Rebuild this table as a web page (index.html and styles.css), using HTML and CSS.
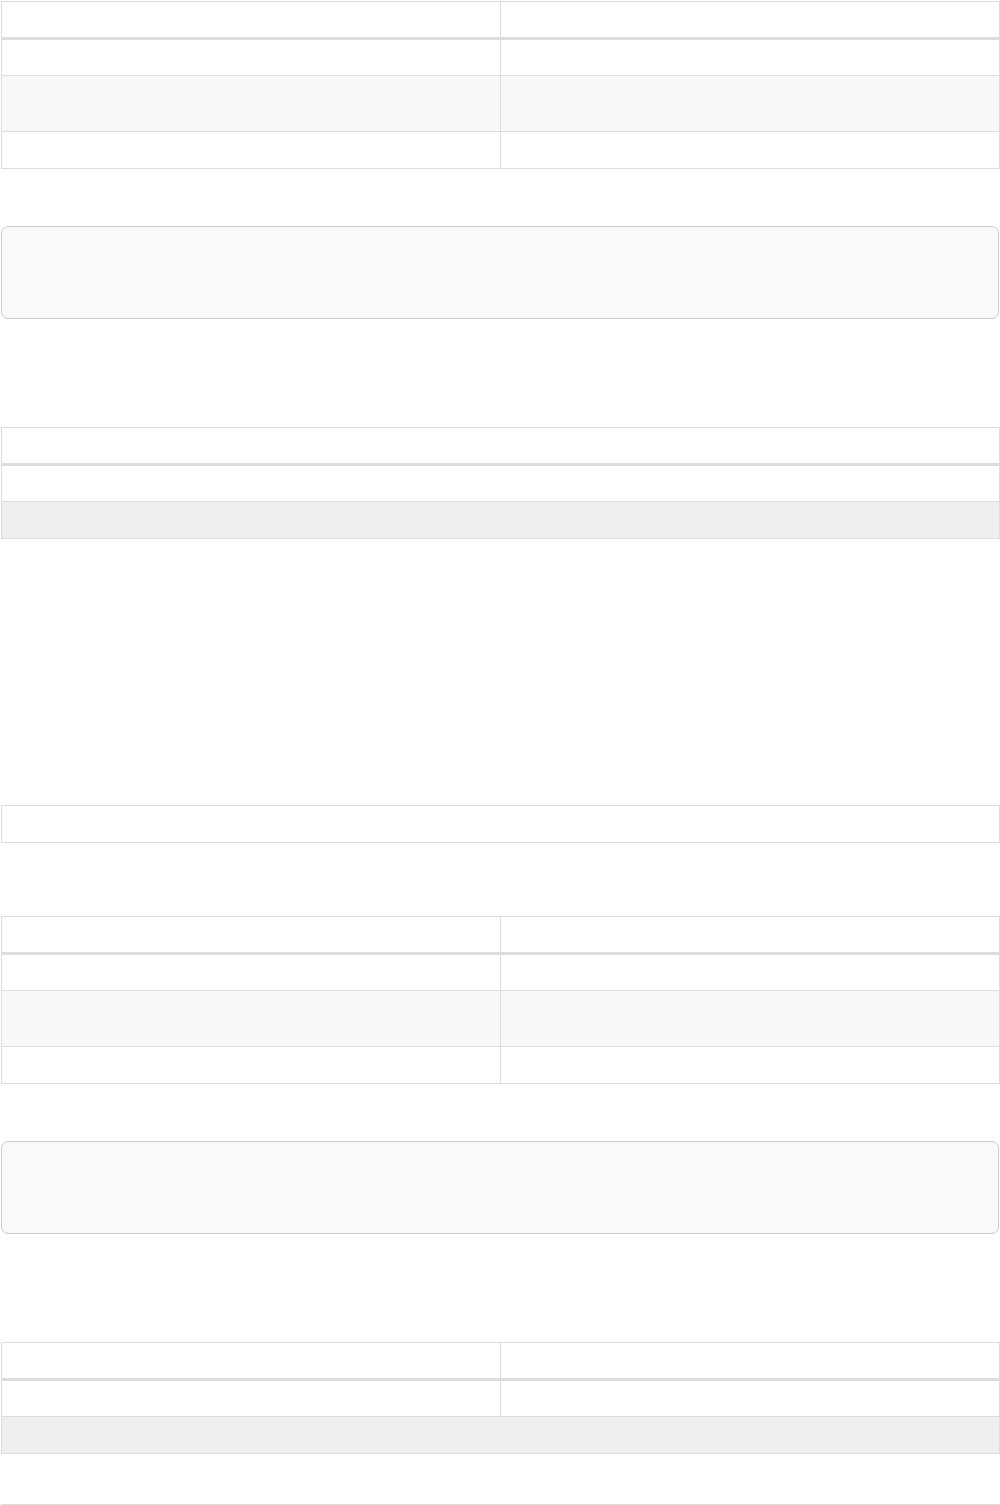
FILE: index.html
```html
<!DOCTYPE html>
<html>
  <head>
    <meta name="viewport" content="width=device-width, initial-scale=1">
    <link rel="stylesheet" href="styles.css">
  </head>
  <body>
    <div class="grid-table">
      <div class="row head"><div class="cell"></div><div class="cell"></div></div>
      <div class="row"><div class="cell"></div><div class="cell"></div></div>
      <div class="row tall striped"><div class="cell"></div><div class="cell"></div></div>
      <div class="row last"><div class="cell"></div><div class="cell"></div></div>
    </div>

    <pre class="callout callout-top"></pre>

    <div class="grid-table block-gap">
      <div class="row head wide"><div class="cell"></div></div>
      <div class="row wide"><div class="cell"></div></div>
      <div class="row wide last muted"><div class="cell"></div></div>
    </div>

    <div class="grid-table single">
      <div class="row wide last"><div class="cell"></div></div>
    </div>

    <div class="grid-table after-single">
      <div class="row head"><div class="cell"></div><div class="cell"></div></div>
      <div class="row"><div class="cell"></div><div class="cell"></div></div>
      <div class="row tall striped"><div class="cell"></div><div class="cell"></div></div>
      <div class="row last"><div class="cell"></div><div class="cell"></div></div>
    </div>

    <pre class="callout callout-top"></pre>

    <div class="grid-table block-gap">
      <div class="row head"><div class="cell"></div><div class="cell"></div></div>
      <div class="row"><div class="cell"></div><div class="cell"></div></div>
      <div class="row wide last muted"><div class="cell"></div></div>
    </div>

    <div class="grid-table next">
      <div class="row head"><div class="cell"></div><div class="cell"></div></div>
      <div class="row"><div class="cell"></div><div class="cell"></div></div>
    </div>
  </body>
</html>
```

FILE: styles.css
```css
body { margin: 0; padding: 1px 0 0 1px; background: #fff; font-family: "Liberation Sans", Arial, sans-serif; font-size: 14px; color: #333 }

.grid-table { border: 1px solid #ddd; background: #ddd; display: flex; flex-direction: column; gap: 1px }
.row { display: grid; grid-template-columns: 1fr 1fr; column-gap: 1px; height: 35px }
.row.head { margin-bottom: 2px }
.row.tall { height: 55px }
.row.last { height: 36px }
.row.wide { grid-template-columns: 1fr }
.cell { background: #fff }
.striped .cell { background: #f8f8f8 }
.muted .cell { background: #efefef }

.callout { margin: 57px 1px 0 0; height: 91px; border: 1px solid #ccc; border-radius: 7px; background: #f9f9f9 }
.block-gap { margin-top: 108px }
.single { margin-top: 266px }
.after-single { margin-top: 73px }
.next { margin-top: 50px }
```
